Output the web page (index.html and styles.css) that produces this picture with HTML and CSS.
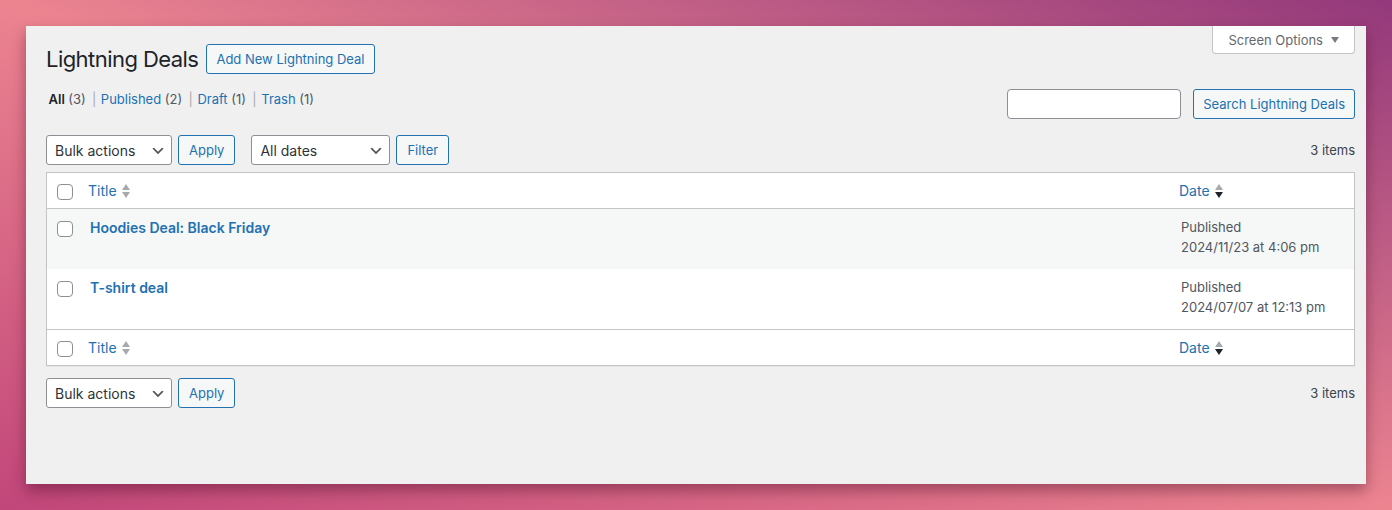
FILE: index.html
```html
<!DOCTYPE html>
<html lang="en">
<head>
<meta charset="utf-8">
<title>Lightning Deals</title>
<link rel="stylesheet" href="styles.css">
</head>
<body>
<div class="panel">
  <div class="head-row">
    <div class="title-wrap">
      <h1 class="page-title">Lightning Deals</h1>
      <a class="btn btn-narrow">Add New Lightning Deal</a>
    </div>
    <div class="screen-options">
      <span>Screen Options</span>
      <svg class="so-arrow" width="8" height="6" viewBox="0 0 8 6"><polygon points="0,0 8,0 4,6" fill="#787c82"/></svg>
    </div>
  </div>

  <div class="filter-row">
    <ul class="subsubsub">
      <li><a class="current">All <span class="count">(3)</span></a> |</li>
      <li><a>Published <span class="count">(2)</span></a> |</li>
      <li><a>Draft <span class="count">(1)</span></a> |</li>
      <li><a>Trash <span class="count">(1)</span></a></li>
    </ul>
    <div class="search-box">
      <input class="search-input" type="text">
      <button class="btn btn-narrow">Search Lightning Deals</button>
    </div>
  </div>

  <div class="tablenav">
    <div class="actions">
      <div class="select select-bulk">
        <span>Bulk actions</span>
        <svg width="16" height="16" viewBox="0 0 20 20"><path d="M5 6l5 5 5-5 2 1-7 7-7-7 2-1z" fill="#555"/></svg>
      </div>
      <button class="btn">Apply</button>
    </div>
    <div class="actions">
      <div class="select select-dates">
        <span>All dates</span>
        <svg width="16" height="16" viewBox="0 0 20 20"><path d="M5 6l5 5 5-5 2 1-7 7-7-7 2-1z" fill="#555"/></svg>
      </div>
      <button class="btn">Filter</button>
    </div>
    <div class="displaying-num">3 items</div>
  </div>

  <table class="list-table">
    <colgroup><col class="col-check"><col><col class="col-date"></colgroup>
    <thead>
      <tr>
        <td class="check-head"><span class="cb"></span></td>
        <th class="sortable"><a>Title <svg class="sort" width="8" height="14" viewBox="0 0 8 14"><polygon points="4,0 8,6 0,6" fill="#a7aaad"/><polygon points="0,8 8,8 4,14" fill="#a7aaad"/></svg></a></th>
        <th class="sortable"><a>Date <svg class="sort" width="8" height="14" viewBox="0 0 8 14"><polygon points="4,0 8,6 0,6" fill="#a7aaad"/><polygon points="0,8 8,8 4,14" fill="#1d2327"/></svg></a></th>
      </tr>
    </thead>
    <tbody>
      <tr class="alt">
        <th class="check-row"><span class="cb"></span></th>
        <td class="title-cell"><strong><a>Hoodies Deal: Black Friday</a></strong></td>
        <td class="date-cell">Published<br>2024/11/23 at 4:06 pm</td>
      </tr>
      <tr>
        <th class="check-row"><span class="cb"></span></th>
        <td class="title-cell"><strong><a>T-shirt deal</a></strong></td>
        <td class="date-cell">Published<br>2024/07/07 at 12:13 pm</td>
      </tr>
    </tbody>
    <tfoot>
      <tr>
        <td class="check-head"><span class="cb"></span></td>
        <th class="sortable"><a>Title <svg class="sort" width="8" height="14" viewBox="0 0 8 14"><polygon points="4,0 8,6 0,6" fill="#a7aaad"/><polygon points="0,8 8,8 4,14" fill="#a7aaad"/></svg></a></th>
        <th class="sortable"><a>Date <svg class="sort" width="8" height="14" viewBox="0 0 8 14"><polygon points="4,0 8,6 0,6" fill="#a7aaad"/><polygon points="0,8 8,8 4,14" fill="#1d2327"/></svg></a></th>
      </tr>
    </tfoot>
  </table>

  <div class="tablenav tablenav-bottom">
    <div class="actions">
      <div class="select select-bulk">
        <span>Bulk actions</span>
        <svg width="16" height="16" viewBox="0 0 20 20"><path d="M5 6l5 5 5-5 2 1-7 7-7-7 2-1z" fill="#555"/></svg>
      </div>
      <button class="btn">Apply</button>
    </div>
    <div class="displaying-num">3 items</div>
  </div>
</div>
</body>
</html>
```

FILE: styles.css
```css
* { box-sizing: border-box; }

html, body {
  margin: 0;
  padding: 0;
}

body {
  width: 1392px;
  height: 510px;
  overflow: hidden;
  padding: 26px;
  background: linear-gradient(to top right, #c1467a 0%, #ec8490 50%, #93387b 100%);
  font-family: Inter, "Noto Sans", sans-serif;
  font-size: 13px;
  color: #3c434a;
}

.panel {
  width: 1340px;
  height: 458px;
  background: #f0f0f1;
  padding: 0 11px 0 20px;
  display: flex;
  flex-direction: column;
  box-shadow: 0 7px 14px rgba(60, 0, 30, 0.4);
}

/* header */
.head-row {
  display: flex;
  justify-content: space-between;
  align-items: flex-start;
}

.title-wrap {
  display: flex;
  align-items: center;
  gap: 8px;
  margin-top: 18px;
}

.page-title {
  margin: 0;
  font-size: 22px;
  letter-spacing: -0.55px;
  font-weight: 400;
  line-height: 30px;
  color: #1d2327;
}

.btn {
  display: inline-flex;
  align-items: center;
  justify-content: center;
  height: 30px;
  padding: 0 10px;
  border: 1px solid #2271b1;
  border-radius: 3px;
  background: #f6f7f7;
  color: #2271b1;
  font-family: inherit;
  font-size: 13px;
  line-height: 1;
  white-space: nowrap;
  cursor: pointer;
}

.btn-narrow { padding: 0 9px; }

.screen-options {
  display: flex;
  align-items: center;
  gap: 8px;
  height: 28px;
  padding: 0 15px;
  background: #fff;
  border: 1px solid #c3c4c7;
  border-top: none;
  border-radius: 0 0 4px 4px;
  color: #646970;
  font-size: 13px;
}

.so-arrow { display: block; }

/* status links + search */
.filter-row {
  display: flex;
  justify-content: space-between;
  align-items: flex-start;
  margin-top: 12px;
}

.subsubsub {
  list-style: none;
  margin: 0;
  padding: 0;
  display: flex;
  line-height: 26px;
  font-size: 13px;
  color: #a7aaad;
  white-space: pre;
}

.subsubsub li { margin: 0; }

.subsubsub a {
  padding: 0 2.6px;
  color: #2271b1;
  text-decoration: none;
}

.subsubsub a.current {
  color: #1d2327;
  font-weight: 600;
}

.subsubsub .count {
  color: #50575e;
  font-weight: 400;
}

.subsubsub li + li { margin-left: 2px; }

.search-box {
  display: flex;
  gap: 12px;
  margin-top: 3px;
}

.search-input {
  width: 174px;
  height: 30px;
  border: 1px solid #8c8f94;
  border-radius: 4px;
  background: #fff;
  margin: 0;
}

/* tablenav */
.tablenav {
  display: flex;
  align-items: center;
  gap: 16px;
  height: 30px;
  margin-top: 16px;
}

.tablenav-bottom { margin-top: 12px; }

.actions {
  display: flex;
  gap: 6px;
}

.select {
  display: flex;
  align-items: center;
  justify-content: space-between;
  height: 30px;
  padding: 0 5px 0 8px;
  background: #fff;
  border: 1px solid #8c8f94;
  border-radius: 3px;
  color: #2c3338;
  font-size: 14px;
}

.select svg { display: block; margin-top: 1px; }

.select-bulk { width: 126px; }
.select-dates { width: 139px; }

.displaying-num {
  margin-left: auto;
  color: #3c434a;
  font-size: 13px;
}

/* table */
.list-table {
  width: 100%;
  margin-top: 7px;
  border: 1px solid #c3c4c7;
  border-spacing: 0;
  border-collapse: separate;
  table-layout: fixed;
  background: #fff;
  box-shadow: 0 1px 1px rgba(0, 0, 0, 0.04);
}

.col-check { width: 33px; }
.col-date { width: 183px; }

.list-table th,
.list-table td {
  padding: 0;
  text-align: left;
  font-weight: 400;
}

.list-table thead th,
.list-table thead td {
  border-bottom: 1px solid #c3c4c7;
}

.list-table tfoot th,
.list-table tfoot td {
  border-top: 1px solid #c3c4c7;
}

.check-head {
  vertical-align: middle;
  padding: 3px 0 0 10px !important;
}

.check-row {
  vertical-align: top;
  padding: 12px 0 0 10px !important;
}

.cb {
  display: block;
  width: 16px;
  height: 16px;
  border: 1px solid #8c8f94;
  border-radius: 4px;
  background: #fff;
}

.sortable a {
  display: flex;
  align-items: center;
  gap: 5px;
  padding: 8px;
  font-size: 14px;
  line-height: 19px;
  color: #2271b1;
}

.sort { display: block; }

.list-table tbody tr.alt { background: #f6f7f7; }

.title-cell,
.date-cell {
  vertical-align: top;
  padding: 8px 10px !important;
  height: 60px;
}

.title-cell strong {
  display: block;
  font-size: 14px;
  font-weight: 600;
  line-height: 21px;
}

.title-cell a { color: #2271b1; }

.date-cell {
  font-size: 13px;
  line-height: 20px;
  color: #50575e;
}
```
